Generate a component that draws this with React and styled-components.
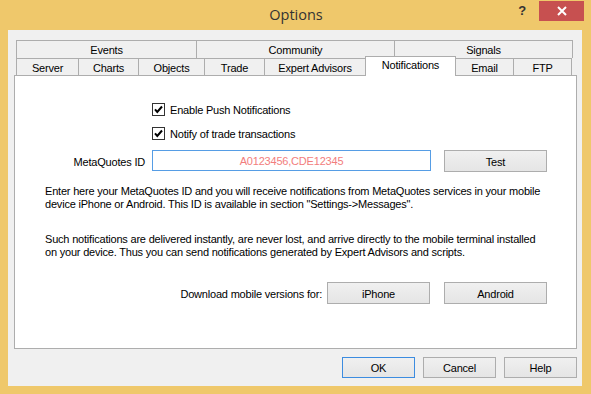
import React from 'react';
import styled, { createGlobalStyle } from 'styled-components';

const Global = createGlobalStyle`
  html, body { margin: 0; padding: 0; background: #EFC86B; }
  body {
    font-family: "Liberation Sans", Arial, sans-serif;
    font-size: 11px;
    letter-spacing: -0.2px;
    color: #000;
  }
  * { box-sizing: border-box; }
`;

const Window = styled.div`
  width: 591px;
  height: 394px;
  background: #EFC86B;
  display: flex;
  flex-direction: column;
`;

const TitleBar = styled.div`
  height: 30px;
  flex: none;
  display: grid;
  grid-template-columns: 1fr auto 1fr;
`;

const Title = styled.div`
  font-family: "Open Sans", "Noto Sans", sans-serif;
  font-size: 14.5px;
  letter-spacing: 0;
  line-height: 30px;
  color: #333;
  padding-left: 1px;
`;

const Controls = styled.div`
  display: flex;
  justify-content: flex-end;
  align-items: flex-start;
  padding-right: 7px;
  padding-top: 1px;
`;

const Help = styled.div`
  font-family: "Liberation Sans", Arial, sans-serif;
  font-weight: bold;
  font-size: 13px;
  line-height: 20px;
  color: #333;
  margin-right: 13px;
`;

const Close = styled.div`
  width: 45px;
  height: 20px;
  background: #C75050;
  display: flex;
  align-items: center;
  justify-content: center;
`;

const Client = styled.div`
  flex: 1;
  margin: 0 9px 8px 8px;
  background: #F0F0F0;
  padding: 10px 6px 8px 6px;
  display: flex;
  flex-direction: column;
`;

const TabRow = styled.div`
  display: flex;
  margin-left: 2px;
  margin-right: 2px;
  height: ${p => p.$h}px;
`;

const Tab = styled.div`
  width: ${p => p.$w}px;
  flex: none;
  height: ${p => (p.$active ? p.$h + 3 : p.$h)}px;
  margin-top: ${p => (p.$active ? -2 : 0)}px;
  border-top: 1px solid #ADADAD;
  border-left: 1px solid #ADADAD;
  ${p => (p.$last ? 'border-right: 1px solid #ADADAD;' : '')}
  ${p => (p.$active ? 'border-right: 1px solid #ADADAD; margin-right: -1px;' : '')}
  background: ${p => (p.$active ? '#FFFFFF' : '#F0F0F0')};
  position: ${p => (p.$active ? 'relative' : 'static')};
  z-index: ${p => (p.$active ? 2 : 'auto')};
  display: flex;
  justify-content: center;
  padding-top: ${p => (p.$active ? 2 : 3)}px;
  line-height: 13px;
  white-space: nowrap;
`;

const Panel = styled.div`
  height: 274px;
  margin-right: -1px;
  border: 1px solid #ADADAD;
  background: #FFFFFF;
  position: relative;
  z-index: 1;
  display: flex;
  flex-direction: column;
`;

const CheckRow = styled.label`
  display: flex;
  align-items: center;
  gap: 5px;
  height: 13px;
  padding-left: 137px;
  margin-top: ${p => p.$mt}px;
  line-height: 13px;
`;

const CheckText = styled.span`
  padding-top: 2px;
`;

const Box = styled.span`
  width: 13px;
  height: 13px;
  flex: none;
  border: 1px solid #333;
  background: #fff;
  display: flex;
  align-items: center;
  justify-content: center;
`;

const FieldRow = styled.div`
  display: flex;
  align-items: flex-start;
  margin-top: ${p => p.$mt}px;
`;

const FieldLabel = styled.div`
  width: ${p => p.$w}px;
  flex: none;
  text-align: right;
  line-height: 22px;
  padding-top: 1px;
  margin-right: ${p => p.$gap}px;
  white-space: nowrap;
`;

const IdInput = styled.div`
  width: 279px;
  height: 21px;
  border: 1px solid #569DE5;
  background: #fff;
  color: #F27D7D;
  text-align: center;
  line-height: 20px;
  margin-right: 13px;
`;

const Button = styled.div`
  width: ${p => p.$w}px;
  height: ${p => p.$h}px;
  flex: none;
  border: 1px solid ${p => (p.$default ? '#3C8CE0' : '#ADADAD')};
  background: linear-gradient(#F0F0F0, #E5E5E5);
  display: flex;
  align-items: center;
  justify-content: center;
  padding-top: 1px;
  margin-right: ${p => p.$mr || 0}px;
`;

const Para = styled.p`
  margin: ${p => p.$mt}px 0 0 0;
  padding-left: 30px;
  line-height: 13px;
  white-space: nowrap;
`;

const ButtonBar = styled.div`
  display: flex;
  justify-content: flex-end;
  gap: 8px;
  margin-top: 8px;
  margin-right: -1px;
`;

const Check = () => (
  <Box>
    <svg width="9" height="9" viewBox="0 0 9 9">
      <path d="M1 4.3 L3.3 7 L8 1.5" fill="none" stroke="#000" strokeWidth="2" />
    </svg>
  </Box>
);

const row1 = [
  { t: 'Events', w: 180 },
  { t: 'Community', w: 198 },
  { t: 'Signals', w: 179 },
];
const row2 = [
  { t: 'Server', w: 62 },
  { t: 'Charts', w: 60 },
  { t: 'Objects', w: 66 },
  { t: 'Trade', w: 60 },
  { t: 'Expert Advisors', w: 101 },
  { t: 'Notifications', w: 91, active: true },
  { t: 'Email', w: 58 },
  { t: 'FTP', w: 59 },
];

export default function App() {
  return (
    <Window>
      <Global />
      <TitleBar>
        <div />
        <Title>Options</Title>
        <Controls>
          <Help>?</Help>
          <Close>
            <svg width="10" height="10" viewBox="0 0 10 10">
              <path d="M1 1 L9 9 M9 1 L1 9" stroke="#fff" strokeWidth="2" />
            </svg>
          </Close>
        </Controls>
      </TitleBar>
      <Client>
        <TabRow $h={18}>
          {row1.map((t, i) => (
            <Tab key={t.t} $w={t.w} $h={18} $last={i === row1.length - 1}>{t.t}</Tab>
          ))}
        </TabRow>
        <TabRow $h={17}>
          {row2.map((t, i) => (
            <Tab key={t.t} $w={t.w} $h={17} $active={t.active} $last={i === row2.length - 1}>{t.t}</Tab>
          ))}
        </TabRow>
        <Panel>
          <CheckRow $mt={27}>
            <Check />
            <CheckText>Enable Push Notifications</CheckText>
          </CheckRow>
          <CheckRow $mt={11}>
            <Check />
            <CheckText>Notify of trade transactions</CheckText>
          </CheckRow>
          <FieldRow $mt={10}>
            <FieldLabel $w={130} $gap={7}>MetaQuotes ID</FieldLabel>
            <IdInput>A0123456,CDE12345</IdInput>
            <Button $w={103} $h={22}>Test</Button>
          </FieldRow>
          <Para $mt={12}>
            Enter here your MetaQuotes ID and you will receive notifications from MetaQuotes services in your mobile
            <br />
            device iPhone or Android. This ID is available in section "Settings-&gt;Messages".
          </Para>
          <Para $mt={22}>
            Such notifications are delivered instantly, are never lost, and arrive directly to the mobile terminal installed
            <br />
            on your device. Thus you can send notifications generated by Expert Advisors and scripts.
          </Para>
          <FieldRow $mt={23}>
            <FieldLabel $w={307} $gap={5}>Download mobile versions for:</FieldLabel>
            <Button $w={103} $h={22} $mr={14}>iPhone</Button>
            <Button $w={103} $h={22}>Android</Button>
          </FieldRow>
        </Panel>
        <ButtonBar>
          <Button $w={73} $h={21} $default>OK</Button>
          <Button $w={73} $h={21}>Cancel</Button>
          <Button $w={73} $h={21}>Help</Button>
        </ButtonBar>
      </Client>
    </Window>
  );
}
